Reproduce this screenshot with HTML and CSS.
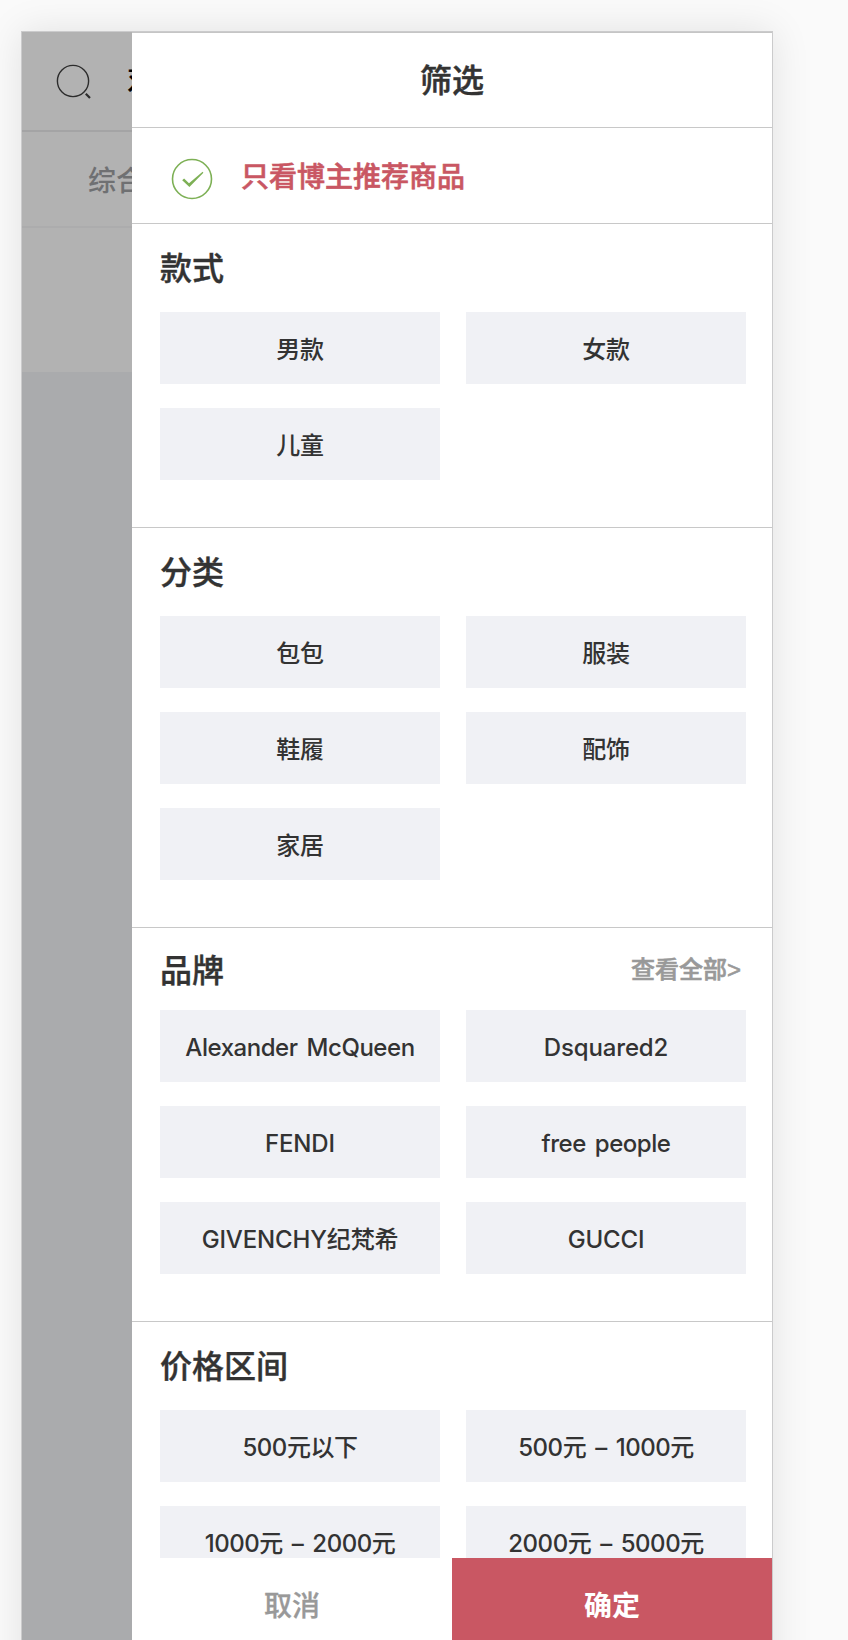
FILE: index.html
```html
<!DOCTYPE html>
<html lang="zh-CN">
<head>
<meta charset="utf-8">
<title>筛选</title>
<link rel="stylesheet" href="styles.css">
</head>
<body>
<div class="phone">
  <div class="backdrop">
    <div class="search-bar">
      <svg class="search-icon" width="36" height="36" viewBox="0 0 36 36" fill="none" stroke="#2c2c2c"><circle cx="18" cy="18" r="15.6" stroke-width="1.4"/><path d="M30.8 30.8L35 35" stroke-width="2.2"/></svg>
      <span class="search-text">对</span>
    </div>
    <div class="tabs"><span>综合</span></div>
    <div class="strip"></div>
  </div>
  <div class="drawer">
    <header class="title">筛选</header>
    <div class="recommend">
      <svg width="42" height="42" viewBox="0 0 42 42" fill="none"><circle cx="21" cy="21" r="19.5" stroke="#7db055" stroke-width="1.6"/><path d="M11.2 22.3L13.1 20.6L18 25.2L31.6 13.8L32.4 14.8L18.4 29Z" fill="#7db055"/></svg>
      <span>只看博主推荐商品</span>
    </div>
    <div class="sections">
      <section class="section">
        <h2>款式</h2>
        <div class="chips"><div class="chip">男款</div><div class="chip">女款</div><div class="chip">儿童</div></div>
      </section>
      <section class="section">
        <h2>分类</h2>
        <div class="chips"><div class="chip">包包</div><div class="chip">服装</div><div class="chip">鞋履</div><div class="chip">配饰</div><div class="chip">家居</div></div>
      </section>
      <section class="section section-brand">
        <div class="heading"><h2>品牌</h2><a class="more">查看全部&gt;</a></div>
        <div class="chips"><div class="chip tight">Alexander McQueen</div><div class="chip">Dsquared2</div><div class="chip">FENDI</div><div class="chip tight">free people</div><div class="chip">GIVENCHY纪梵希</div><div class="chip">GUCCI</div></div>
      </section>
      <section class="section section-last">
        <h2>价格区间</h2>
        <div class="chips"><div class="chip tight">500元以下</div><div class="chip tight">500元 – 1000元</div><div class="chip tight">1000元 – 2000元</div><div class="chip tight">2000元 – 5000元</div></div>
      </section>
    </div>
    <footer class="actions"><div class="cancel">取消</div><div class="confirm">确定</div></footer>
  </div>
</div>
</body>
</html>
```
FILE: styles.css
```css
* { box-sizing: border-box; }
body {
  margin: 0;
  height: 1640px;
  overflow: hidden;
  padding: 31px 0 0 21px;
  background: #fafafa;
  color: #333;
  font-family: "Liberation Sans", "Noto Sans CJK SC", sans-serif;
  font-weight: 500;
}
.phone {
  position: relative;
  z-index: 0;
  display: flex;
  width: 752px;
  height: 1609px;
  border: 1px solid #cbcbcc;
  border-bottom: 0;
}
/* soft shadow that continues below the fold */
.phone::before {
  content: "";
  position: absolute;
  z-index: -1;
  inset: -1px -1px -60px;
  box-shadow: 0 0 36px rgba(0, 0, 0, .1);
}
.backdrop {
  width: 110px;
  overflow: hidden;
  background: #aaabad;
  white-space: nowrap;
}
.search-bar {
  display: flex;
  align-items: center;
  height: 100px;
  padding-left: 33px;
  border-bottom: 2px solid #a4a4a5;
  background: #b2b2b2;
}
.search-icon { flex: none; }
.search-text {
  margin-left: 36px;
  color: #000;
  font-size: 28px;
  line-height: 40px;
  -webkit-text-stroke: .2px;
}
.tabs {
  height: 96px;
  padding: 30px 0 0 66px;
  border-bottom: 2px solid #acacad;
  background: #b2b2b2;
  color: #6f7072;
  font-size: 28px;
  line-height: 40px;
}
.strip { height: 144px; background: #b2b2b2; }
.drawer {
  display: flex;
  flex-direction: column;
  width: 640px;
  height: 1608px;
  border-top: 1px solid #c5c5c5;
  background: #fff;
}
.title {
  flex: none;
  height: 95px;
  border-bottom: 1px solid #c8c8c8;
  font-size: 32px;
  line-height: 97px;
  text-align: center;
  -webkit-text-stroke: .5px;
}
.recommend {
  display: flex;
  flex: none;
  gap: 28px;
  height: 96px;
  padding: 30px 0 0 39px;
  border-bottom: 1px solid #c8c8c8;
  color: #c95763;
  font-size: 28px;
  line-height: 39px;
  -webkit-text-stroke: .6px;
}
.sections { flex: 1; min-height: 0; overflow: hidden; }
.section {
  padding: 0 26px 47px 28px;
  border-bottom: 1px solid #c8c8c8;
}
h2 {
  height: 88px;
  margin: 0;
  font-size: 32px;
  font-weight: 500;
  line-height: 91px;
  -webkit-text-stroke: .4px;
}
.heading { display: flex; justify-content: space-between; height: 82px; }
.heading h2 { height: 82px; line-height: 86px; }
.more {
  padding-right: 5px;
  color: #999;
  font-size: 24px;
  line-height: 84px;
  -webkit-text-stroke: .6px;
}
.chips { display: grid; grid-template-columns: 280px 280px; gap: 24px 26px; }
.chip {
  height: 72px;
  background: #f0f1f5;
  font-family: Inter, "Noto Sans CJK SC", sans-serif;
  font-size: 24px;
  letter-spacing: -.15px;
  line-height: 75px;
  text-align: center;
  white-space: nowrap;
}
.tight { letter-spacing: -.45px; word-spacing: 3px; }
.actions {
  display: flex;
  flex: none;
  height: 82px;
  font-size: 28px;
  line-height: 98px;
  text-align: center;
}
.cancel { width: 320px; background: #fff; color: #999; -webkit-text-stroke: .3px; }
.confirm { width: 320px; background: #c95763; color: #fff; font-weight: 700; }
```
